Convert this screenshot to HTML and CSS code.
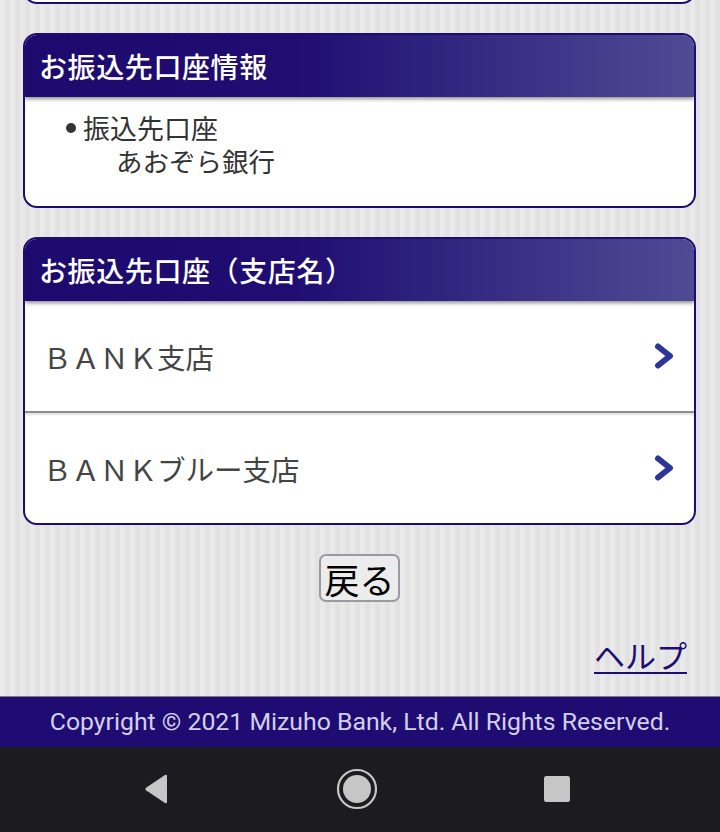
FILE: index.html
```html
<!DOCTYPE html>
<html lang="ja">
<head>
  <meta charset="UTF-8">
  <meta name="viewport" content="width=device-width, initial-scale=1.0">
  <title>お振込先口座（支店名）</title>
  <link rel="stylesheet" href="styles.css">
</head>
<body>

<div class="page">
  <main class="content">
    <!-- 前のブロック（スクロールで下端のみ表示） -->
    <section class="card card-prev"></section>

    <section class="card">
      <h2 class="card-title">お振込先口座情報</h2>
      <div class="card-body">
        <ul class="info-list">
          <li>
            <span class="info-label">振込先口座</span>
            <span class="info-value">あおぞら銀行</span>
          </li>
        </ul>
      </div>
    </section>

    <section class="card">
      <h2 class="card-title">お振込先口座（支店名）</h2>
      <ul class="branch-list">
        <li>
          <a class="branch" href="#">
            <span>ＢＡＮＫ支店</span>
            <svg class="chevron" width="24" height="28" viewBox="0 0 24 28"><path d="M6 4.5 L18 14 L6 23.5"/></svg>
          </a>
        </li>
        <li>
          <a class="branch" href="#">
            <span>ＢＡＮＫブルー支店</span>
            <svg class="chevron" width="24" height="28" viewBox="0 0 24 28"><path d="M6 4.5 L18 14 L6 23.5"/></svg>
          </a>
        </li>
      </ul>
    </section>

    <div class="actions">
      <button type="button" class="back-button">戻る</button>
    </div>

    <div class="help">
      <a href="#">ヘルプ</a>
    </div>
  </main>

  <footer class="footer">Copyright © 2021 Mizuho Bank, Ltd. All Rights Reserved.</footer>
</div>

<!-- 端末のナビゲーションバー -->
<nav class="navbar">
  <svg width="30" height="32" viewBox="0 0 30 32"><path d="M26 3 L26 29 Q26 31 24 30 L5 17.2 Q3.5 16 5 14.8 L24 2 Q26 1 26 3 Z" fill="#c6c6c6"/></svg>
  <svg width="42" height="42" viewBox="0 0 42 42"><circle cx="21" cy="21" r="19" fill="none" stroke="#c6c6c6" stroke-width="2.2"/><circle cx="21" cy="21" r="14" fill="#c6c6c6"/></svg>
  <svg width="28" height="28" viewBox="0 0 28 28"><rect x="1" y="1" width="26" height="26" rx="2.5" fill="#c6c6c6"/></svg>
</nav>

</body>
</html>
```

FILE: styles.css
```css
body {
  margin: 0;
  font-family: "Noto Sans CJK JP", "Noto Sans", sans-serif;
  background-color: #1c1b20;
  overflow: hidden;
}
.page {
  background: repeating-linear-gradient(90deg, #e9e9e9 0, #e9e9e9 5px, #e2e2e2 5px, #e2e2e2 10px);
}
.content {
  padding: 0 24px 0 23px;
}
/* カード */
.card {
  margin-top: 29px;
  background-color: #fff;
  border: 2px solid #1e0c72;
  border-radius: 14px;
  overflow: hidden;
}
.card-prev {
  margin-top: -40px;
  height: 40px;
}
.card-title {
  margin: 0;
  height: 62px;
  padding-left: 14px;
  display: flex;
  align-items: center;
  font-size: 28px;
  font-weight: 500;
  letter-spacing: 0.6px;
  color: #fff;
  background: linear-gradient(to right, #1c0a6e 0%, #1f0d72 40%, #4f4b94 100%);
  box-shadow: 0 2px 4px rgba(0, 0, 0, 0.45);
  position: relative;
}
.card-body {
  height: 109px;
  padding: 14px 0 0 41px;
  box-sizing: border-box;
}
.info-list {
  list-style: none;
  margin: 0;
  padding: 0;
  color: #333;
}
.info-list li {
  display: flex;
  flex-direction: column;
}
.info-label {
  font-size: 27px;
  line-height: 33px;
  display: flex;
  align-items: center;
}
.info-label::before {
  content: "";
  width: 10px;
  height: 10px;
  border-radius: 50%;
  background-color: #333;
  margin-right: 7px;
}
.info-value {
  font-size: 26.5px;
  line-height: 33px;
  padding-left: 50px;
}
/* 支店リスト */
.branch-list {
  list-style: none;
  margin: 0;
  padding: 0;
}
.branch-list li + li {
  border-top: 2px solid #8e8e8e;
  box-shadow: inset 0 2px 2px rgba(0, 0, 0, 0.12);
}
.branch {
  height: 110px;
  display: flex;
  align-items: center;
  justify-content: space-between;
  padding: 0 18px 0 18px;
  font-size: 28.5px;
  color: #444;
  text-decoration: none;
}
.branch-list li:last-child .branch {
  height: 110px;
}
.chevron path {
  fill: none;
  stroke: #2e3596;
  stroke-width: 6;
  stroke-linecap: round;
  stroke-linejoin: round;
}
/* 戻るボタン */
.actions {
  margin-top: 29px;
  display: flex;
  justify-content: center;
}
.back-button {
  height: 48px;
  padding: 0 3px;
  font-family: "Noto Sans CJK JP", sans-serif;
  font-size: 35px;
  line-height: 1;
  color: #000;
  background-color: #ececec;
  border: 2px solid #9a9aa2;
  border-radius: 7px;
}
.help {
  text-align: right;
  padding: 34px 9px 16px 0;
  line-height: 38px;
}
.help a {
  font-size: 31px;
  color: #1e0c72;
  text-decoration-thickness: 2px;
  text-underline-offset: 4px;
}
.footer {
  height: 50px;
  line-height: 50px;
  border-top: 1px solid #7a7a8a;
  background-color: #1e0c73;
  color: #d3cfea;
  text-align: center;
  font-family: Roboto, "Noto Sans", sans-serif;
  font-size: 24.8px;
}
.navbar {
  height: 84px;
  background-color: #1c1b20;
  display: flex;
  align-items: center;
  justify-content: space-between;
  padding: 0 149px 4px 141px;
}
```
